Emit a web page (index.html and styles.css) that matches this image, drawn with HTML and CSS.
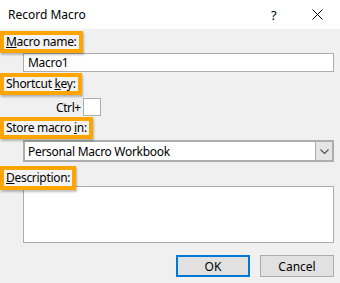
FILE: index.html
```html
<!DOCTYPE html>
<html lang="en">
<head>
    <meta charset="UTF-8">
    <title>Record Macro</title>
    <link rel="stylesheet" href="styles.css">
</head>
<body>
    <div class="dialog">
        <div class="titlebar">
            <span class="title">Record Macro</span>
            <span class="help">?</span>
            <span class="close">
                <svg width="11" height="11" viewBox="0 0 11 11">
                    <path d="M0.5 0.5 L10.5 10.5 M10.5 0.5 L0.5 10.5" stroke="#000" stroke-width="1" fill="none"/>
                </svg>
            </span>
        </div>
        <div class="content">
            <div class="field">
                <label class="mark" for="name"><u>M</u>acro name:</label>
                <input class="textbox" id="name" type="text" value="Macro1">
            </div>
            <div class="field">
                <label class="mark" for="key">Shortcut <u>k</u>ey:</label>
                <div class="ctrl-row">
                    <span class="ctrl">Ctrl+</span>
                    <input class="keybox" id="key" type="text">
                </div>
            </div>
            <div class="field">
                <label class="mark" for="store">Store macro <u>i</u>n:</label>
                <div class="combo" id="store">
                    <span class="combo-text">Personal Macro Workbook</span>
                    <span class="combo-btn">
                        <svg width="9" height="5" viewBox="0 0 9 5">
                            <path d="M0.5 0.5 L4.5 4.5 L8.5 0.5" stroke="#555" stroke-width="1.2" fill="none"/>
                        </svg>
                    </span>
                </div>
            </div>
            <div class="field">
                <label class="mark mark-over" for="desc"><u>D</u>escription:</label>
                <textarea class="memo" id="desc"></textarea>
            </div>
            <div class="buttons">
                <button class="btn btn-default">OK</button>
                <button class="btn">Cancel</button>
            </div>
        </div>
    </div>
</body>
</html>
```

FILE: styles.css
```css
html, body {
    margin: 0;
    padding: 0;
}
body {
    font-family: "Noto Sans", "Open Sans", sans-serif;
    font-size: 12px;
    color: #000;
    background-color: #f0f0f0;
}
.dialog {
    width: 340px;
    height: 283px;
    background-color: #f0f0f0;
}
.titlebar {
    height: 29px;
    background-color: #fff;
    display: flex;
    align-items: center;
}
.title {
    padding-left: 8px;
    flex: 1;
}
.help {
    width: 16px;
    margin-right: 25px;
    font-size: 13px;
}
.close {
    display: flex;
    margin-right: 17px;
}
.content {
    padding: 1px 6px 0 0;
}
.field {
    display: flex;
    flex-direction: column;
    align-items: flex-start;
}
.mark {
    display: inline-block;
    border: 4px solid #ffa500;
    padding: 0 2px;
    line-height: 14px;
    background-color: #f3f3f3;
    box-shadow: 1px 2px 2px rgba(0,0,0,0.25);
    margin-top: 1px;
    position: relative;
    z-index: 1;
    letter-spacing: -0.3px;
}
.textbox {
    margin: 0 0 0 23px;
    width: 311px;
    height: 19px;
    box-sizing: border-box;
    border: 1px solid #adadad;
    padding: 0 4px;
    font-family: inherit;
    font-size: 12px;
    letter-spacing: -0.3px;
    background-color: #fff;
}
.ctrl-row {
    display: flex;
    align-items: center;
    margin: 3px 0 0 56px;
}
.ctrl {
    margin-right: 2px;
    letter-spacing: -0.4px;
}
.keybox {
    margin: 0;
    width: 18px;
    height: 18px;
    box-sizing: border-box;
    border: 1px solid #adadad;
    background-color: #fff;
}
.combo {
    margin: 1px 0 0 23px;
    width: 311px;
    height: 22px;
    box-sizing: border-box;
    border: 2px solid #adadad;
    background-color: #fff;
    display: flex;
    align-items: center;
}
.combo-text {
    flex: 1;
    padding-left: 3px;
    letter-spacing: -0.3px;
}
.combo-btn {
    width: 16px;
    height: 18px;
    background-color: #e5e5e5;
    border-left: 1px solid #adadad;
    display: flex;
    align-items: center;
    justify-content: center;
}
.mark-over {
    margin-top: 4px;
    padding-top: 1px;
    padding-bottom: 1px;
}
.memo {
    margin: -4px 0 0 23px;
    width: 311px;
    height: 57px;
    box-sizing: border-box;
    border: 1px solid #adadad;
    background-color: #fff;
    resize: none;
}
.buttons {
    display: flex;
    justify-content: flex-end;
    gap: 10px;
    margin-top: 12px;
}
.btn {
    width: 74px;
    height: 22px;
    box-sizing: border-box;
    border: 1px solid #adadad;
    background-color: #e1e1e1;
    font-family: inherit;
    font-size: 12px;
    color: #000;
    padding: 0;
}
.btn-default {
    border: 2px solid #0078d7;
}
```
